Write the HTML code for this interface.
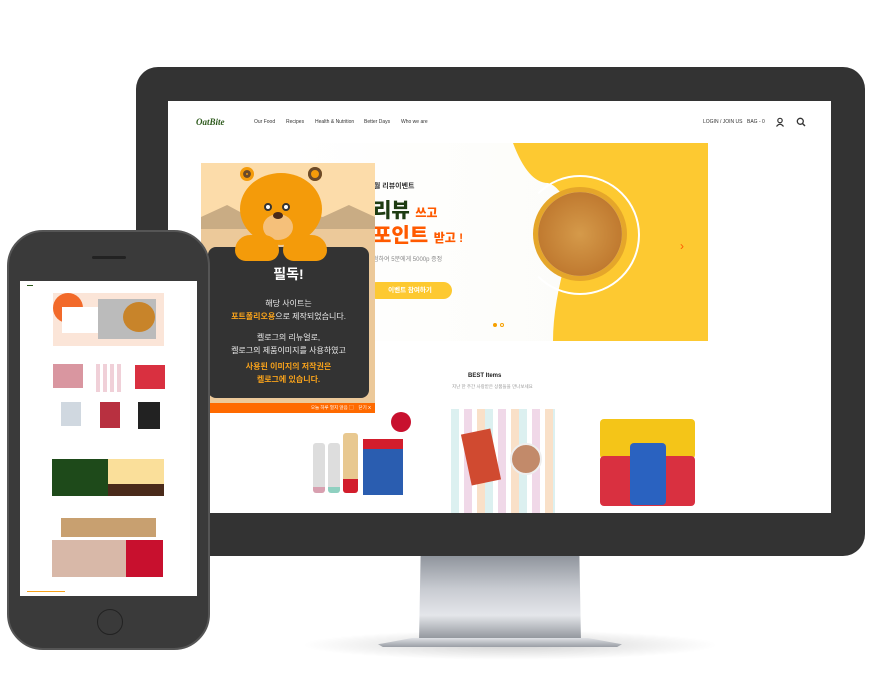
<!DOCTYPE html>
<html><head><meta charset="utf-8"><style>
*{margin:0;padding:0;box-sizing:border-box}
body{width:870px;height:700px;background:#fff;position:relative;overflow:hidden;font-family:"Liberation Sans","Noto Sans CJK KR",sans-serif}
.a{position:absolute}
.nav{font-size:5px;color:#333}
</style></head><body>
<!-- shadow under stand -->
<div class="a" style="left:300px;top:630px;width:420px;height:30px;border-radius:50%;background:radial-gradient(ellipse,rgba(0,0,0,.18),rgba(0,0,0,0) 70%)"></div>
<!-- stand -->
<div class="a" style="left:419px;top:555px;width:162px;height:86px;background:linear-gradient(#8e939b,#c9ccd2 40%,#e4e6ea 70%,#8a8e95);clip-path:polygon(1% 0,99% 0,100% 100%,0 100%)"></div>
<div class="a" style="left:378px;top:638px;width:244px;height:9px;background:linear-gradient(#dfe1e5,#9a9ea5);clip-path:polygon(14% 0,86% 0,100% 70%,98% 100%,2% 100%,0 70%)"></div>
<!-- monitor -->
<div class="a" style="left:136px;top:67px;width:729px;height:489px;background:#333;border-radius:22px"></div>
<div class="a" style="left:168px;top:101px;width:663px;height:412px;background:#fff;overflow:hidden">
  <div class="a" style="left:28px;top:16px;font:italic bold 9px 'Liberation Serif',serif;color:#2d5a1c">OatBite</div>
  <div class="a nav" style="left:86px;top:18px">Our Food</div>
  <div class="a nav" style="left:118px;top:18px">Recipes</div>
  <div class="a nav" style="left:147px;top:18px">Health &amp; Nutrition</div>
  <div class="a nav" style="left:196px;top:18px">Better Days</div>
  <div class="a nav" style="left:233px;top:18px">Who we are</div>
  <div class="a nav" style="left:535px;top:18px">LOGIN / JOIN US</div>
  <div class="a nav" style="left:579px;top:18px">BAG - 0</div>
  <svg class="a" style="left:607px;top:16px" width="10" height="10" viewBox="0 0 10 10"><circle cx="5" cy="3.5" r="2.2" fill="none" stroke="#333" stroke-width="1.2"/><path d="M1.5 9.5Q5 5 8.5 9.5" fill="none" stroke="#333" stroke-width="1.2"/></svg>
  <svg class="a" style="left:628px;top:16px" width="10" height="10" viewBox="0 0 10 10"><circle cx="4.3" cy="4.3" r="3" fill="none" stroke="#333" stroke-width="1.3"/><path d="M6.5 6.5L9 9" stroke="#333" stroke-width="1.4"/></svg>
  <!-- hero -->
  <div class="a" style="left:120px;top:42px;width:420px;height:198px;background:linear-gradient(90deg,#fff,#fbfbf6)"></div>
  <div class="a" style="left:345px;top:42px;width:195px;height:198px;background:#fdc931;clip-path:path('M0 0 Q15 40 35 40 Q60 48 55 110 Q40 160 40 198 L195 198 L195 0 Z')"></div>
  <div class="a" style="left:352px;top:74px;width:120px;height:120px;border-radius:50%;border:2px solid #fff;border-left-color:transparent;border-right-color:#fff"></div>
  <div class="a" style="left:365px;top:86px;width:94px;height:94px;border-radius:50%;background:#e5a62a"></div>
  <div class="a" style="left:370px;top:91px;width:84px;height:84px;border-radius:50%;background:radial-gradient(#d59a4a,#c07a30 70%,#eee 72%)"></div>
  <div class="a" style="left:512px;top:138px;color:#ff5a00;font-size:12px">›</div>
  <div class="a" style="left:202px;top:80px;font-size:7px;color:#333;font-weight:bold">7월 리뷰이벤트</div>
  <div class="a" style="left:205px;top:93px;font-size:20px;font-weight:900;color:#1e3c12">리뷰 <span style="font-size:12px;color:#ff5a00">쓰고</span></div>
  <div class="a" style="left:205px;top:118px;font-size:20px;font-weight:900;color:#ff5a00">포인트 <span style="font-size:12px">받고 !</span></div>
  <div class="a" style="left:205px;top:153px;font-size:6px;color:#888">첨하여 5분에게 5000p 증정</div>
  <div class="a" style="left:200px;top:181px;width:84px;height:17px;border-radius:9px;background:#fdc931;color:#fff;font-size:6.5px;font-weight:bold;text-align:center;line-height:17px">이벤트 참여하기</div>
  <div class="a" style="left:325px;top:222px;width:4px;height:4px;border-radius:50%;background:#f6a000"></div>
  <div class="a" style="left:332px;top:222px;width:4px;height:4px;border-radius:50%;border:1px solid #f6a000"></div>
  <div class="a" style="left:300px;top:272px;font-size:6px;font-weight:bold;color:#222">BEST Items</div>
  <div class="a" style="left:284px;top:283px;font-size:4.5px;color:#999">지난 한 주간 사랑받은 상품들을 만나보세요</div>
  <!-- products -->
  <div class="a" style="left:145px;top:342px;width:12px;height:50px;background:#ddd;border-radius:3px;border-bottom:6px solid #d8a0b0"></div>
  <div class="a" style="left:160px;top:342px;width:12px;height:50px;background:#ddd;border-radius:3px;border-bottom:6px solid #8fd0c0"></div>
  <div class="a" style="left:175px;top:332px;width:15px;height:60px;background:#e8c890;border-radius:3px;border-bottom:14px solid #d21d2c"></div>
  <div class="a" style="left:195px;top:338px;width:40px;height:56px;background:#2a5db0;border-top:10px solid #d21d2c"></div>
  <div class="a" style="left:223px;top:311px;width:20px;height:20px;border-radius:50%;background:#c8102e"></div>
  <div class="a" style="left:283px;top:308px;width:104px;height:104px;background:repeating-linear-gradient(90deg,#dcf0f0 0 8px,#fff 8px 13px,#f0d8e8 13px 21px,#fff 21px 26px,#f9e0c8 26px 34px)"></div>
  <div class="a" style="left:298px;top:330px;width:30px;height:52px;background:#d04a30;transform:rotate(-12deg)"></div>
  <div class="a" style="left:342px;top:342px;width:32px;height:32px;border-radius:50%;background:#c28a6a;border:2px solid #eee"></div>
  <div class="a" style="left:432px;top:318px;width:95px;height:40px;background:#f4c518;border-radius:4px"></div>
  <div class="a" style="left:432px;top:355px;width:95px;height:50px;background:#d93040;border-radius:4px"></div>
  <div class="a" style="left:462px;top:342px;width:36px;height:62px;background:#2a62c0;border-radius:4px"></div>
  <!-- popup -->
  <div class="a" style="left:33px;top:62px;width:174px;height:250px;background:#fcdcaa"></div>
  <div class="a" style="left:33px;top:100px;width:174px;height:40px;background:#c9ac84;clip-path:polygon(0 100%,0 40%,15% 10%,30% 45%,50% 20%,70% 40%,85% 10%,100% 40%,100% 100%)"></div>
  <div class="a" style="left:33px;top:128px;width:174px;height:184px;background:#ecc99a"></div>
  <div class="a" style="left:40px;top:146px;width:161px;height:151px;background:#333;border-radius:8px"></div>
  <div class="a" style="left:72px;top:72px;width:82px;height:72px;border-radius:50%;background:#f49b0a"></div>
  <div class="a" style="left:72px;top:66px;width:14px;height:14px;border-radius:50%;background:#f49b0a;border:3px solid #f49b0a;box-shadow:inset 0 0 0 3px #6b4a2a"></div>
  <div class="a" style="left:140px;top:66px;width:14px;height:14px;border-radius:50%;background:#f49b0a;box-shadow:inset 0 0 0 3px #6b4a2a"></div>
  <div class="a" style="left:95px;top:113px;width:30px;height:26px;border-radius:50%;background:#f5c07a"></div>
  <div class="a" style="left:105px;top:111px;width:10px;height:7px;border-radius:50%;background:#4a2a1a"></div>
  <div class="a" style="left:96px;top:102px;width:8px;height:8px;border-radius:50%;background:#fff;border:2px solid #333"></div>
  <div class="a" style="left:114px;top:102px;width:8px;height:8px;border-radius:50%;background:#fff;border:2px solid #333"></div>
  <div class="a" style="left:67px;top:134px;width:44px;height:26px;border-radius:20px 20px 14px 14px;background:#f49b0a"></div>
  <div class="a" style="left:115px;top:134px;width:44px;height:26px;border-radius:20px 20px 14px 14px;background:#f49b0a"></div>
  <div class="a" style="left:40px;top:163px;width:161px;text-align:center;color:#fff;font-size:14px;font-weight:bold">필독!</div>
  <div class="a" style="left:40px;top:196px;width:161px;text-align:center;color:#eee;font-size:8px;line-height:13px">해당 사이트는<br><b style="color:#f7a21b">포트폴리오용</b>으로 제작되었습니다.</div>
  <div class="a" style="left:40px;top:230px;width:161px;text-align:center;color:#eee;font-size:8px;line-height:13px">켈로그의 리뉴얼로,<br>켈로그의 제품이미지를 사용하였고</div>
  <div class="a" style="left:40px;top:259px;width:161px;text-align:center;color:#f7a21b;font-size:8px;font-weight:bold;line-height:13px">사용된 이미지의 저작권은<br>켈로그에 있습니다.</div>
  <div class="a" style="left:33px;top:302px;width:174px;height:10px;background:#ff6a00;color:#fff;font-size:4.5px;line-height:10px;text-align:right;padding-right:4px">오늘 하루 열지 않음 ▢ &nbsp;&nbsp; 닫기 X</div>
</div>
<!-- phone -->
<div class="a" style="left:7px;top:230px;width:203px;height:420px;background:#3a3a3a;border-radius:36px;border:2px solid #555"></div>
<div class="a" style="left:92px;top:256px;width:34px;height:3px;border-radius:2px;background:#222"></div>
<div class="a" style="left:97px;top:609px;width:26px;height:26px;border-radius:50%;border:1px solid #222"></div>
<div class="a" style="left:20px;top:281px;width:177px;height:315px;background:#fff;overflow:hidden">
  <div class="a" style="left:7px;top:4px;width:6px;height:1px;background:#2d5a1c"></div>
  <div class="a" style="left:33px;top:12px;width:111px;height:53px;background:#fbe5d8"></div>
  <div class="a" style="left:33px;top:12px;width:30px;height:30px;border-radius:50%;background:#f26a2a"></div>
  <div class="a" style="left:42px;top:26px;width:40px;height:26px;background:#fff"></div>
  <div class="a" style="left:78px;top:18px;width:58px;height:40px;background:#bbb"></div>
  <div class="a" style="left:103px;top:21px;width:32px;height:30px;border-radius:50%;background:#c8842a"></div>
  <div class="a" style="left:33px;top:83px;width:30px;height:24px;background:#c05060;opacity:.6"></div>
  <div class="a" style="left:76px;top:83px;width:28px;height:28px;background:repeating-linear-gradient(90deg,#f0d0d8 0 4px,#fff 4px 7px)"></div>
  <div class="a" style="left:115px;top:84px;width:30px;height:24px;background:#d93040"></div>
  <div class="a" style="left:41px;top:121px;width:20px;height:24px;background:#d0d8e0"></div>
  <div class="a" style="left:80px;top:121px;width:20px;height:26px;background:#b83040"></div>
  <div class="a" style="left:118px;top:121px;width:22px;height:27px;background:#222"></div>
  <div class="a" style="left:32px;top:178px;width:56px;height:37px;background:#1e4a1a"></div>
  <div class="a" style="left:88px;top:178px;width:56px;height:37px;background:#fadf9a;border-bottom:12px solid #4a2a1a"></div>
  <div class="a" style="left:41px;top:237px;width:95px;height:19px;background:#c8a070"></div>
  <div class="a" style="left:32px;top:259px;width:74px;height:37px;background:#d8b8a8"></div>
  <div class="a" style="left:106px;top:259px;width:37px;height:37px;background:#c8102e"></div>
  <div class="a" style="left:7px;top:310px;width:38px;height:1px;background:#f7a21b"></div>
</div>
</body></html>
